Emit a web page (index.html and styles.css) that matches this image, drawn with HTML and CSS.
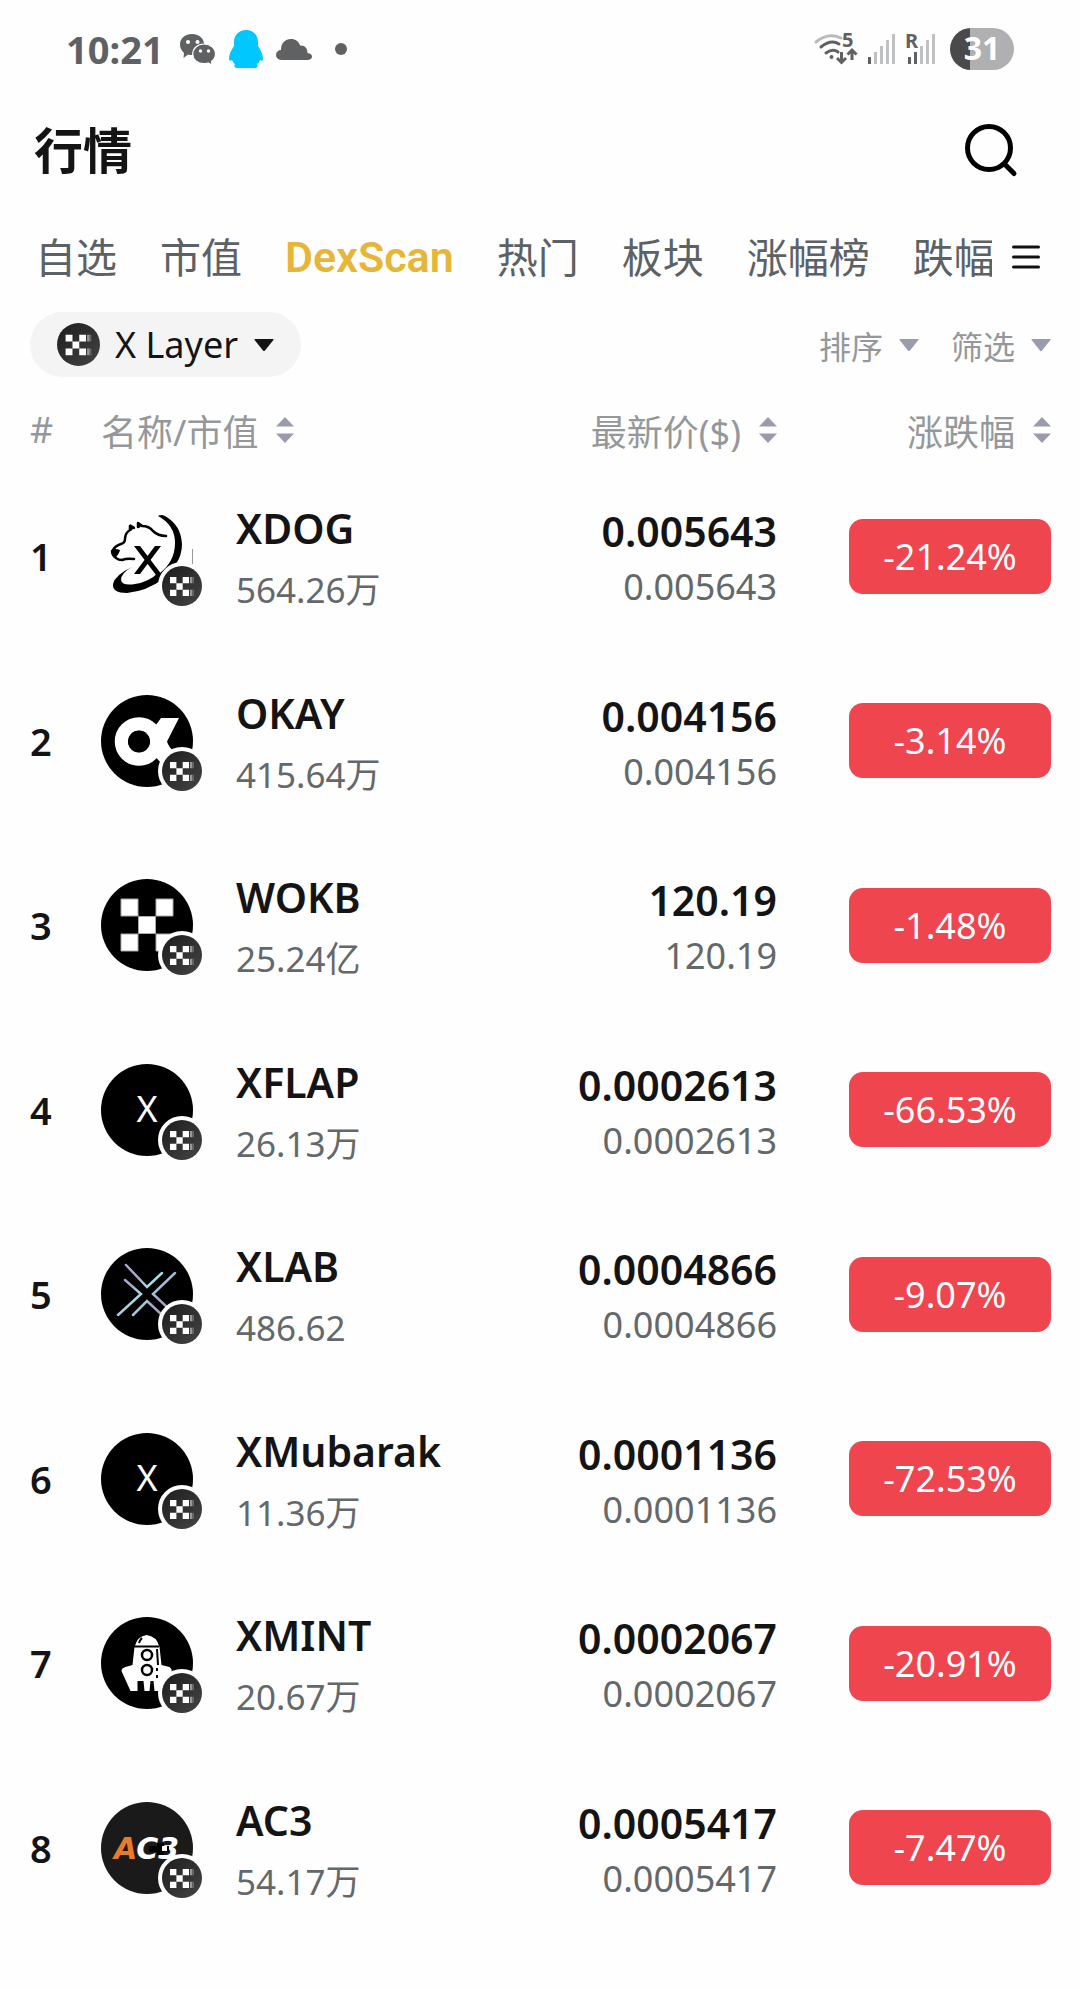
FILE: index.html
```
<!DOCTYPE html>
<html lang="zh-CN">
<head>
    <meta charset="UTF-8">
    <meta name="viewport" content="width=device-width, initial-scale=1.0">
    <title>行情</title>
    <link rel="stylesheet" href="styles.css">
</head>
<body>
    <!-- iconos compartidos -->
    <svg class="defs" width="0" height="0" aria-hidden="true">
        <defs>
            <linearGradient id="gris" x1="0" y1="0" x2="1" y2="1">
                <stop offset="0" stop-color="#1c1c1c"/>
                <stop offset="1" stop-color="#454545"/>
            </linearGradient>
            <linearGradient id="neon" gradientUnits="userSpaceOnUse" x1="17" y1="17" x2="74" y2="67">
                <stop offset="0" stop-color="#b3a6d6"/>
                <stop offset="0.3" stop-color="#a9a6cc"/>
                <stop offset="0.5" stop-color="#a5e0e4"/>
                <stop offset="0.7" stop-color="#a3a2c8"/>
                <stop offset="1" stop-color="#9d9cc8"/>
            </linearGradient>
        </defs>
        <symbol id="xlayer" viewBox="0 0 40 40">
            <circle cx="20" cy="20" r="20" fill="url(#gris)"/>
            <path fill="#fff" d="M8 11h6.400v6.300h6.300V11H27v6.300h-6.300v6.400H27V30h-6.300v-6.300h-6.300V30H8v-6.300h6.400v-6.400H8z"/>
            <path fill="#999" d="M28 11h2.400v6.300H28zM28 23.700h2.400V30H28z"/>
            <path fill="#666" d="M30.400 11H32v6.300h-1.600zM30.400 23.700H32V30h-1.600z"/>
        </symbol>
        <symbol id="down" viewBox="0 0 20 12">
            <path fill="currentColor" d="M1 0h18q1 0 .4 1L11 11.400q-1 1-2 0L.6 1Q0 0 1 0z"/>
        </symbol>
        <symbol id="sort" viewBox="0 0 18 26">
            <path fill="currentColor" d="M9 0l9 9.500H0zM9 26l9-9.500H0z"/>
        </symbol>
    </svg>

    <div class="status">
        <span class="time">10:21</span>
        <svg class="wechat" width="36" height="31" viewBox="0 0 36 31">
            <path fill="#5f6163" d="M12 0c7 0 12 4.500 12 10s-5 11-12 11q-2 0-4-.6L3.500 24 4 19Q0 15.500 0 10.500C0 4.500 5 0 12 0z"/>
            <path fill="#5f6163" stroke="#fff" stroke-width="1.200" d="M24 10c6.500 0 11.500 4.300 11.500 10 0 3-1.500 5.500-4 7.500l.5 3.500-4-2q-2 .7-4 .7c-6.500 0-11.300-4.200-11.300-9.700S17.500 10 24 10z"/>
            <g fill="#fff"><circle cx="8" cy="8" r="2"/><circle cx="17.500" cy="8" r="2"/><circle cx="20.500" cy="17" r="1.700"/><circle cx="28.500" cy="17" r="1.700"/></g>
        </svg>
        <svg class="qq" width="34" height="38" viewBox="0 0 34 38">
            <path fill="#00c8ff" d="M17 0c7 0 12 5 12 12v4q5 7 5 13 0 3-3 1-1 3-3 4 2 4-2 4H8q-4 0-2-4-2-1-3-4-3 2-3-1 0-6 5-13v-4C5 5 10 0 17 0z"/>
        </svg>
        <svg class="cloud" width="36" height="21" viewBox="0 0 36 21">
            <path fill="#5f6163" d="M5 21a5 5 0 0 1 0-10C5 4 9 0 15 0c4.500 0 8 2.500 9 6.500 5-.5 7.500 3 7.500 7.500q4.500.5 4.500 3.500T32 21z"/>
        </svg>
        <span class="dot"></span>
        <svg class="wifi" width="44" height="34" viewBox="0 0 44 34">
            <g fill="none" stroke-linecap="round" stroke-width="3">
                <path stroke="#b9bbbd" d="M2 10Q14 0 27 6"/>
                <path stroke="#5f6163" d="M7 15q10-8 18-3M12 21q7-5 12-1"/>
            </g>
            <circle cx="17.500" cy="25" r="2" fill="#5f6163"/>
            <path fill="none" stroke="#5f6163" stroke-width="3" d="M27.500 20v10m-4.500-4l4.500 4.500L32 26M38 28V18m-4.500 4.500L38 18l4.500 4.500"/>
            <text x="28" y="15" class="small">5</text>
        </svg>
        <svg class="signal" width="27" height="30" viewBox="0 0 27 30">
            <path fill="#5f6163" d="M0 23h3v7H0z"/>
            <path fill="#bfc0c2" d="M6 18h3v12H6zM12 12h3v18h-3zM18 6h3v24h-3zM24 0h3v30h-3z"/>
        </svg>
        <svg class="signal" width="30" height="30" viewBox="0 0 30 30">
            <path fill="#bfc0c2" d="M15 12h3v18h-3zM21 6h3v24h-3zM27 0h3v30h-3z"/>
            <path fill="#5f6163" d="M3 23h3v7H3zM9 18h3v12H9z"/>
            <text x="0" y="14" class="small">R</text>
        </svg>
        <span class="battery">31</span>
    </div>

    <header>
        <h1>行情</h1>
        <button class="search" type="button" aria-label="搜索">
            <svg width="54" height="54" viewBox="0 0 54 54" fill="none" stroke="#000" stroke-width="5" stroke-linecap="round">
                <circle cx="25" cy="25" r="21.500"/>
                <path d="M40.500 41L50 50.500"/>
            </svg>
        </button>
    </header>

    <nav>
        <div class="tabs">
            <a href="#">自选</a>
            <a href="#">市值</a>
            <a href="#" class="active">DexScan</a>
            <a href="#">热门</a>
            <a href="#">板块</a>
            <a href="#">涨幅榜</a>
            <a href="#">跌幅</a>
        </div>
        <button class="menu" type="button" aria-label="菜单">
            <svg width="28" height="24" viewBox="0 0 28 24" stroke="#111" stroke-width="3" stroke-linecap="round">
                <path d="M1.500 2h25M1.500 12h25M1.500 22h25"/>
            </svg>
        </button>
    </nav>

    <div class="filters">
        <label class="chain">
            <svg width="43" height="43"><use href="#xlayer"/></svg>
            <select aria-label="链">
                <option>X Layer</option>
            </select>
            <svg width="20" height="12"><use href="#down"/></svg>
        </label>
        <button class="filter" type="button">排序 <svg width="20" height="12"><use href="#down"/></svg></button>
        <button class="filter" type="button">筛选 <svg width="20" height="12"><use href="#down"/></svg></button>
    </div>

    <table>
        <thead>
            <tr>
                <th class="num">#</th>
                <th class="name"><button type="button">名称/市值 <svg width="18" height="26"><use href="#sort"/></svg></button></th>
                <th class="price"><button type="button">最新价($) <svg width="18" height="26"><use href="#sort"/></svg></button></th>
                <th class="change"><button type="button">涨跌幅 <svg width="18" height="26"><use href="#sort"/></svg></button></th>
            </tr>
        </thead>
        <tbody>
            <tr>
                <td class="num">1</td>
                <td>
                    <div class="coin">
                        <div class="logo">
                            <svg width="92" height="92" viewBox="0 0 92 92">
                                <g fill="none" stroke="#000" stroke-width="2.500" stroke-linecap="round" stroke-linejoin="round">
                                    <path d="M12 40q2-4 8-6 4-1 4-5 0-6 5-9v-4l4 2M37 17v-4l4 3q7 0 11 5 5 5 13 5M12 43q2 7 9 7 5-2 12-1"/>
                                </g>
                                <path d="M10 40q4-2 9 0-1 5-6 8-4-4-3-8zM29 14l5 3-4 4zM37 12l5 3-4 3z"/>
                                <path d="M57 6q3-2 7 0 16 9 17 28 0 11-6 20-4 7-13 13l-3-4q15-12 15-30 0-18-17-27z"/>
                                <path d="M31 57q-17 8-19 17-1 9 14 9 20-2 36-14l-4-7q-10 10-24 12-13 2-14-4 0-7 11-13z"/>
                                <path d="M33 36h6l22 29h-6zM54 36h6L39 64h-6z"/>
                                <path stroke="#999" stroke-width="1" d="M91.500 39v15"/>
                            </svg>
                            <svg class="badge"><use href="#xlayer"/></svg>
                        </div>
                        <div class="info"><b>XDOG</b><span>564.26万</span></div>
                    </div>
                </td>
                <td class="price"><b>0.005643</b><span>0.005643</span></td>
                <td class="change"><span class="pill">-21.24%</span></td>
            </tr>
            <tr>
                <td class="num">2</td>
                <td>
                    <div class="coin">
                        <div class="logo black">
                            <svg width="92" height="92" viewBox="0 0 92 92">
                                <circle cx="38" cy="46.500" r="17.500" fill="none" stroke="#fff" stroke-width="13.500"/>
                                <path fill="#fff" d="M60 23h18L66 46.500q2 6 6 9L60 68l-8-9V34z"/>
                                <circle cx="38" cy="46.500" r="11"/>
                            </svg>
                            <svg class="badge"><use href="#xlayer"/></svg>
                        </div>
                        <div class="info"><b>OKAY</b><span>415.64万</span></div>
                    </div>
                </td>
                <td class="price"><b>0.004156</b><span>0.004156</span></td>
                <td class="change"><span class="pill">-3.14%</span></td>
            </tr>
            <tr>
                <td class="num">3</td>
                <td>
                    <div class="coin">
                        <div class="logo black">
                            <svg width="92" height="92" viewBox="0 0 92 92" fill="#fff" stroke="#aaa" stroke-width="1">
                                <path d="M20 20h17v17H20zM55 20h17v17H55zM37.500 37.500h17v17h-17zM20 55h17v17H20zM55 55h17v17H55z"/>
                            </svg>
                            <svg class="badge"><use href="#xlayer"/></svg>
                        </div>
                        <div class="info"><b>WOKB</b><span>25.24亿</span></div>
                    </div>
                </td>
                <td class="price"><b>120.19</b><span>120.19</span></td>
                <td class="change"><span class="pill">-1.48%</span></td>
            </tr>
            <tr>
                <td class="num">4</td>
                <td>
                    <div class="coin">
                        <div class="logo black">X<svg class="badge"><use href="#xlayer"/></svg></div>
                        <div class="info"><b>XFLAP</b><span>26.13万</span></div>
                    </div>
                </td>
                <td class="price"><b>0.0002613</b><span>0.0002613</span></td>
                <td class="change"><span class="pill">-66.53%</span></td>
            </tr>
            <tr>
                <td class="num">5</td>
                <td>
                    <div class="coin">
                        <div class="logo black">
                            <svg width="92" height="92" viewBox="0 0 92 92" fill="none" stroke="url(#neon)" stroke-width="2.500" stroke-linecap="round">
                                <path d="M25 17l21 22 15-14M24 32l16 14-23 21M74 25L52 46l15 14M32 67l14-14 14 13"/>
                            </svg>
                            <svg class="badge"><use href="#xlayer"/></svg>
                        </div>
                        <div class="info"><b>XLAB</b><span>486.62</span></div>
                    </div>
                </td>
                <td class="price"><b>0.0004866</b><span>0.0004866</span></td>
                <td class="change"><span class="pill">-9.07%</span></td>
            </tr>
            <tr>
                <td class="num">6</td>
                <td>
                    <div class="coin">
                        <div class="logo black">X<svg class="badge"><use href="#xlayer"/></svg></div>
                        <div class="info"><b>XMubarak</b><span>11.36万</span></div>
                    </div>
                </td>
                <td class="price"><b>0.0001136</b><span>0.0001136</span></td>
                <td class="change"><span class="pill">-72.53%</span></td>
            </tr>
            <tr>
                <td class="num">7</td>
                <td>
                    <div class="coin">
                        <div class="logo black">
                            <svg width="92" height="92" viewBox="0 0 92 92">
                                <path fill="#fff" d="M45.500 18q10 1 13 12l2 18 8 2q3 2 2 6l-8 18h-9l-1-10h-3l-1 10h-5l-1-10h-6v10h-7l-9-20q0-3 4-4l7-2 2-18q3-11 12-12z"/>
                                <path fill="none" stroke="#000" stroke-width="2" d="M33 29.500h25M41 21q-2 2-3 5M56 32l1 16M56 51v3M56 58v3"/>
                                <circle cx="46" cy="38" r="5" fill="#fff" stroke="#000" stroke-width="2.500"/>
                                <circle cx="46" cy="53" r="5" fill="#fff" stroke="#000" stroke-width="2.500"/>
                            </svg>
                            <svg class="badge"><use href="#xlayer"/></svg>
                        </div>
                        <div class="info"><b>XMINT</b><span>20.67万</span></div>
                    </div>
                </td>
                <td class="price"><b>0.0002067</b><span>0.0002067</span></td>
                <td class="change"><span class="pill">-20.91%</span></td>
            </tr>
            <tr>
                <td class="num">8</td>
                <td>
                    <div class="coin">
                        <div class="logo dark">
                            <svg width="92" height="92" viewBox="0 0 92 92">
                                <text x="13" y="57" class="ac3"><tspan fill="#e87b2b">A</tspan>C3</text>
                                <path d="M48 44h8v-3h7v3h5v6h-5v3h-7v-3h-8z"/>
                                <path fill="#fff" d="M61 44h5v5h-5z"/>
                            </svg>
                            <svg class="badge"><use href="#xlayer"/></svg>
                        </div>
                        <div class="info"><b>AC3</b><span>54.17万</span></div>
                    </div>
                </td>
                <td class="price"><b>0.0005417</b><span>0.0005417</span></td>
                <td class="change"><span class="pill">-7.47%</span></td>
            </tr>
        </tbody>
    </table>
</body>
</html>
```
FILE: styles.css
```
*{
    box-sizing: border-box;
}
body{
    margin: 0;
    background-color: #fefefe;
    color: #141414;
    font-family: "Noto Sans", "Noto Sans CJK SC", sans-serif;
    font-size: 36px;
}
svg{
    display: block;
    flex: none;
    overflow: visible;
}
button{
    border: 0px;
    padding: 0;
    background: none;
    font: inherit;
    color: inherit;
    cursor: pointer;
}
.defs{
    position: absolute;
}

/* barra de estado */
.status{
    display: flex;
    align-items: center;
    height: 98px;
    padding: 0 66px;
    color: #5f6163;
}
.time{
    font-size: 38px;
    font-weight: bold;
    margin-right: 16px;
}
.qq{
    margin: 0 13px;
}
.dot{
    width: 12px;
    height: 12px;
    border-radius: 50%;
    background-color: #5f6163;
    margin-left: 23px;
}
.wifi{
    margin-left: auto;
}
.signal{
    margin-left: 10px;
}
.small{
    font-size: 20px;
    font-weight: bold;
    fill: #5f6163;
}
.battery{
    width: 64px;
    height: 42px;
    margin-left: 15px;
    border-radius: 21px;
    background: linear-gradient(to right, #4a4a4b 31%, #b0b0b2 31%);
    color: white;
    font-size: 32px;
    font-weight: bold;
    line-height: 40px;
    text-align: center;
}

/* titulo */
header{
    display: flex;
    align-items: center;
    justify-content: space-between;
    height: 104px;
    padding: 0 62px 0 34px;
}
h1{
    margin: 0;
    font-size: 49px;
    line-height: 60px;
}

/* pestañas */
nav{
    display: flex;
    align-items: center;
    height: 110px;
    padding: 0 40px 0 35px;
}
.tabs{
    flex: 1;
    display: flex;
    gap: 43px;
    overflow: hidden;
    margin-right: 20px;
}
.tabs a{
    flex: none;
    color: #5b6164;
    font-size: 41px;
    line-height: 60px;
    text-decoration: none;
}
.tabs a.active{
    color: #e6b638;
    font-family: Roboto, sans-serif;
    font-size: 43px;
    font-weight: 600;
}

/* filtros */
.filters{
    display: flex;
    align-items: center;
    gap: 32px;
    padding: 0 29px 18px 30px;
}
.chain{
    display: flex;
    align-items: center;
    gap: 15px;
    height: 65px;
    padding: 0 27px;
    margin-right: auto;
    border-radius: 33px;
    background-color: #f4f4f4;
}
.chain select{
    appearance: none;
    border: 0px;
    padding: 0;
    background: none;
    color: #141414;
    font: inherit;
}
.filter{
    display: flex;
    align-items: center;
    gap: 16px;
    color: #94989b;
    font-size: 32px;
}
.filter svg, th svg{
    color: #9a9cae;
}

/* tabla */
table{
    width: 100%;
    padding: 0 29px 0 30px;
    border-spacing: 0;
    table-layout: fixed;
}
th, td{
    padding: 0;
    text-align: left;
}
th{
    height: 69px;
    color: #94989b;
    font-weight: normal;
}
th button{
    display: inline-flex;
    align-items: center;
    gap: 18px;
    vertical-align: middle;
}
th.num{
    width: 71px;
}
th.price{
    width: 280px;
}
th.change{
    width: 274px;
}
.price, .change{
    text-align: right;
}
td{
    height: 184px;
}
tr:nth-child(even) td{
    height: 185px;
}
td.num{
    font-size: 38px;
    font-weight: 600;
}
.coin{
    display: flex;
    align-items: center;
    gap: 43px;
}
.logo{
    position: relative;
    flex: none;
    width: 92px;
    height: 92px;
    border-radius: 50%;
    color: white;
    line-height: 90px;
    text-align: center;
}
.logo.black{
    background-color: black;
}
.logo.dark{
    background-color: #1a1a1a;
}
.badge{
    position: absolute;
    right: -13px;
    bottom: -8px;
    width: 48px;
    height: 48px;
    border: 4px solid #fefefe;
    border-radius: 50%;
    background-color: #fefefe;
}
.ac3{
    font: italic bold 30px "DejaVu Sans", sans-serif;
    fill: white;
}
td b{
    display: block;
    font-size: 41px;
    font-weight: 600;
}
td b + span{
    display: block;
    color: #63686b;
}
.info, td.price{
    padding-top: 6px;
}
.info b, .info span{
    line-height: 62px;
}
.info span{
    font-size: 35px;
}
.price b, .price span{
    line-height: 55px;
}
.pill{
    display: inline-block;
    width: 202px;
    padding-top: 1px;
    border-radius: 14px;
    background-color: #ef454f;
    color: white;
    line-height: 74px;
    text-align: center;
    vertical-align: middle;
}
```
